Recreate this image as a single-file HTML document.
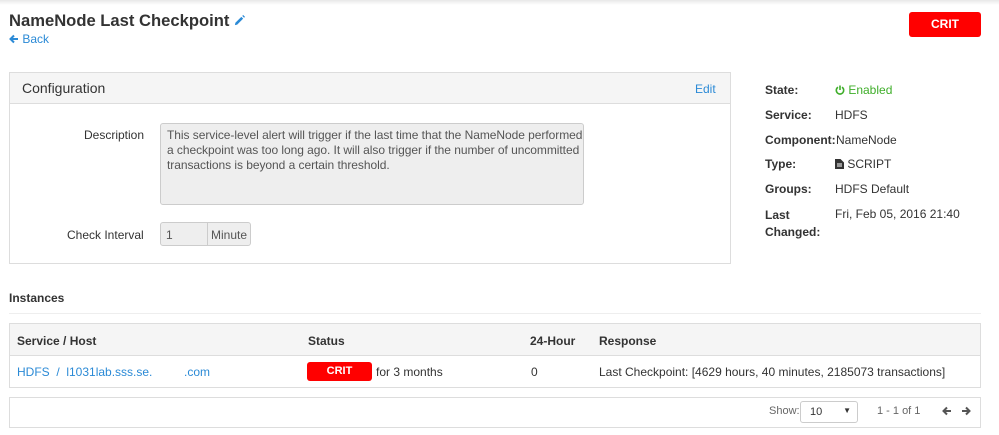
<!DOCTYPE html>
<html><head><meta charset="utf-8"><style>
*{margin:0;padding:0;box-sizing:border-box}
body{width:999px;height:435px;background:#fff;font-family:"Liberation Sans",Arial,sans-serif;font-size:12px;color:#333;position:relative;overflow:hidden}
.a{position:absolute;white-space:nowrap}
.b{font-weight:bold}
.blue{color:#2b8ad6}
.box{position:absolute;border:1px solid #ddd}
</style></head><body>
<div class="a" style="left:0;top:0;width:999px;height:5px;background:linear-gradient(#e8e8e8,#fff)"></div>
<div class="a b" style="left:9px;top:11px;font-size:16.6px;color:#333">NameNode Last Checkpoint
<svg width="11" height="11" viewBox="0 0 12 12" style="vertical-align:0"><path d="M1 11 L1.5 8.5 L8 2 L10 4 L3.5 10.5 Z M9 1 L10 0 L12 2 L11 3 Z" fill="#2b8ad6"/></svg></div>
<div class="a blue" style="left:9px;top:32px;font-size:12px"><svg width="10" height="10" viewBox="0 0 10 10" style="vertical-align:-1px"><path d="M9 5H2M5 1.5L1.5 5L5 8.5" stroke="#2b8ad6" stroke-width="2" fill="none"/></svg> Back</div>
<div class="a b" style="left:909px;top:12px;width:72px;height:25px;background:#f00;color:#fff;border-radius:3px;text-align:center;line-height:25px;font-size:12px">CRIT</div>

<div class="box" style="left:9px;top:72px;width:722px;height:192px"></div>
<div class="a" style="left:10px;top:73px;width:720px;height:31px;background:#f5f5f5;border-bottom:1px solid #ddd"></div>
<div class="a" style="left:22px;top:80px;font-size:14px">Configuration</div>
<div class="a blue" style="left:695px;top:82px">Edit</div>
<div class="a" style="left:84px;top:128px">Description</div>
<div class="a" style="left:160px;top:123px;width:424px;height:82px;background:#eee;border:1px solid #ccc;border-radius:3px;padding:4px 6px;line-height:15px;color:#555;letter-spacing:-0.05px">This service-level alert will trigger if the last time that the NameNode performed<br>a checkpoint was too long ago. It will also trigger if the number of uncommitted<br>transactions is beyond a certain threshold.</div>
<div class="a" style="left:67px;top:228px">Check Interval</div>
<div class="a" style="left:160px;top:222px;width:48px;height:24px;background:#eee;border:1px solid #ccc;border-radius:3px 0 0 3px;padding:5px 5px;color:#555">1</div>
<div class="a" style="left:207px;top:222px;width:44px;height:24px;background:#eee;border:1px solid #ccc;border-radius:0 3px 3px 0;padding:5px 3px;color:#555">Minute</div>

<div class="a b" style="left:765px;top:83px">State:</div>
<div class="a" style="left:835px;top:83px;color:#3fae2a"><svg width="10" height="10" viewBox="0 0 10 10" style="vertical-align:-1px"><path d="M3 2.2A3.7 3.7 0 1 0 7 2.2M5 0.5V5" stroke="#3fae2a" stroke-width="1.6" fill="none"/></svg> Enabled</div>
<div class="a b" style="left:765px;top:108px">Service:</div>
<div class="a" style="left:835px;top:108px">HDFS</div>
<div class="a b" style="left:765px;top:133px">Component:</div>
<div class="a" style="left:836px;top:133px">NameNode</div>
<div class="a b" style="left:765px;top:157px">Type:</div>
<div class="a" style="left:835px;top:157px"><svg width="9" height="10" viewBox="0 0 9 10" style="vertical-align:-1px"><path d="M0 0H5.5L9 3.5V10H0Z" fill="#333"/><path d="M2 5H7M2 7H7" stroke="#fff"/></svg> SCRIPT</div>
<div class="a b" style="left:765px;top:182px">Groups:</div>
<div class="a" style="left:835px;top:182px">HDFS Default</div>
<div class="a b" style="left:765px;top:207px;line-height:17px">Last<br>Changed:</div>
<div class="a" style="left:835px;top:207px">Fri, Feb 05, 2016 21:40</div>

<div class="a b" style="left:9px;top:291px">Instances</div>
<div class="a" style="left:9px;top:313px;width:972px;height:1px;background:#eee"></div>
<div class="box" style="left:9px;top:323px;width:972px;height:65px"></div>
<div class="a" style="left:10px;top:324px;width:970px;height:32px;background:#f5f5f5;border-bottom:1px solid #ddd"></div>
<div class="a b" style="left:17px;top:334px">Service / Host</div>
<div class="a b" style="left:308px;top:334px">Status</div>
<div class="a b" style="left:530px;top:334px">24-Hour</div>
<div class="a b" style="left:599px;top:334px">Response</div>
<div class="a blue" style="left:17px;top:365px">HDFS&nbsp; / &nbsp;l1031lab.sss.se.</div>
<div class="a blue" style="left:184px;top:365px">.com</div>
<div class="a b" style="left:307px;top:362px;width:65px;height:19px;background:#f00;color:#fff;border-radius:3px;text-align:center;line-height:19px;font-size:11px">CRIT</div>
<div class="a" style="left:376px;top:365px">for 3 months</div>
<div class="a" style="left:531px;top:365px">0</div>
<div class="a" style="left:599px;top:365px">Last Checkpoint: [4629 hours, 40 minutes, 2185073 transactions]</div>

<div class="box" style="left:9px;top:397px;width:972px;height:31px"></div>
<div class="a" style="left:769px;top:405px;color:#666;font-size:11px">Show:</div>
<div class="a" style="left:800px;top:401px;width:58px;height:22px;border:1px solid #ccc;border-radius:3px;padding:4px 9px;font-size:11px">10<span style="position:absolute;right:6px;top:4px;font-size:8px">▼</span></div>
<div class="a" style="left:877px;top:405px;color:#666;font-size:11px">1 - 1 of 1</div>
<svg class="a" style="left:942px;top:406px" width="10" height="10" viewBox="0 0 10 10"><path d="M9 5H2M5 1.5L1.5 5L5 8.5" stroke="#555" stroke-width="2" fill="none"/></svg>
<svg class="a" style="left:961px;top:406px" width="10" height="10" viewBox="0 0 10 10"><path d="M1 5H8M5 1.5L8.5 5L5 8.5" stroke="#555" stroke-width="2" fill="none"/></svg>
</body></html>
